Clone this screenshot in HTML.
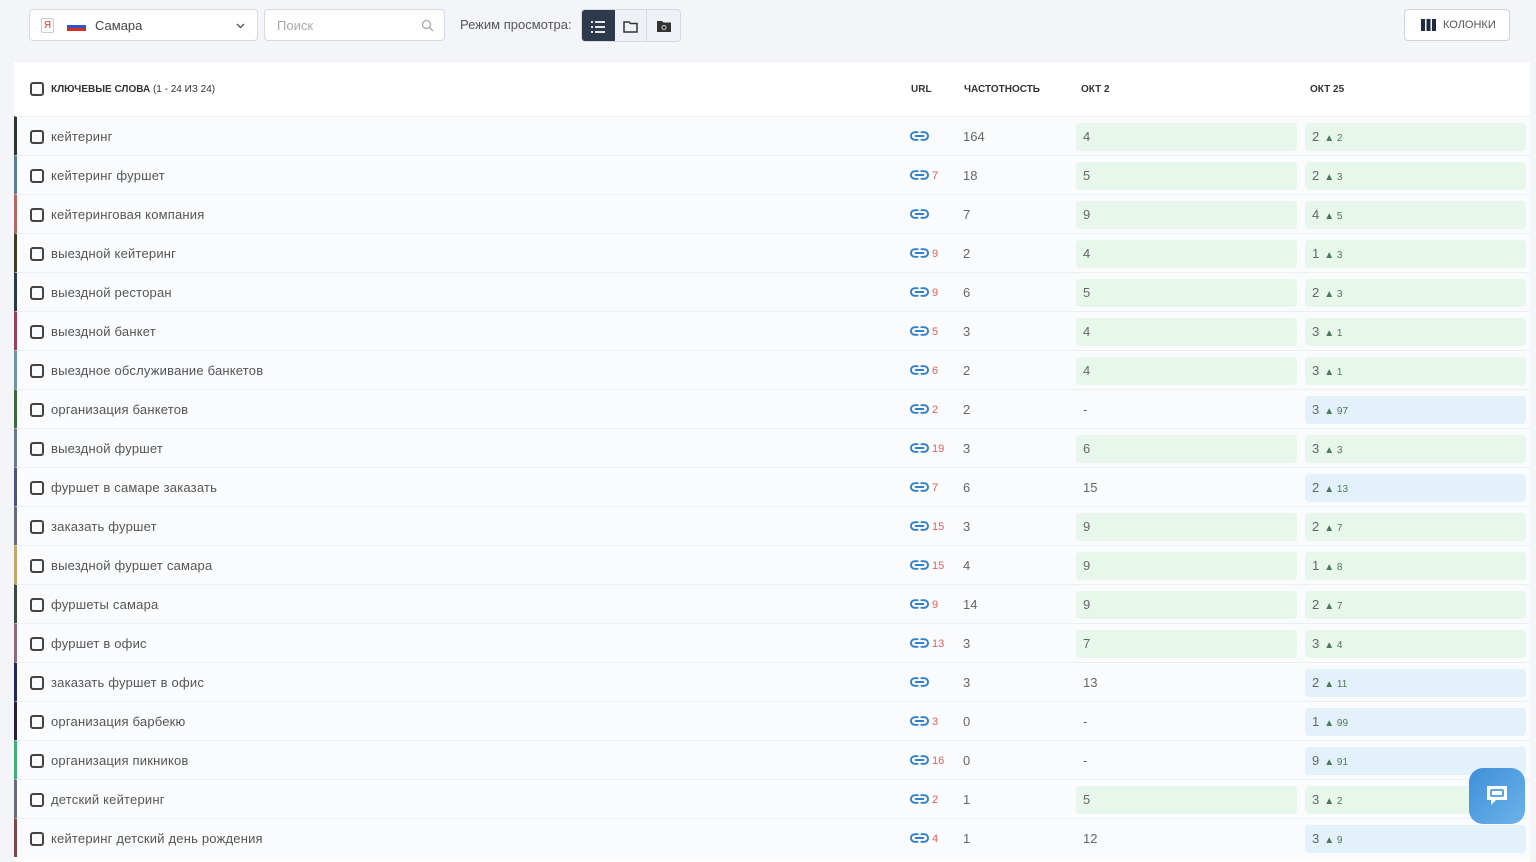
<!DOCTYPE html>
<html><head><meta charset="utf-8"><style>
*{box-sizing:border-box;margin:0;padding:0}
body{width:1536px;height:859px;overflow:hidden;background:#f4f5f9;font-family:"Liberation Sans","DejaVu Sans",sans-serif;color:#555;position:relative}
.sel{position:absolute;left:29px;top:9px;width:229px;height:32px;border:1px solid #d6d9e0;border-radius:4px;background:#fff}
.srch{position:absolute;left:264px;top:9px;width:181px;height:32px;border:1px solid #d6d9e0;border-radius:4px;background:#fff;font-size:13px;color:#aaa;padding:8px 12px}
.mode{position:absolute;left:460px;top:17px;font-size:13px;color:#555}
.btns{position:absolute;left:581px;top:9px;width:100px;height:33px;border:1px solid #d6d9e0;border-radius:4px;background:#eef1f5;display:flex;overflow:hidden}
.btns div{width:33px;height:33px;display:flex;align-items:center;justify-content:center}
.cols{position:absolute;left:1404px;top:9px;width:106px;height:32px;border:1px solid #cfd3da;border-radius:4px;background:#fff;font-size:11px;color:#555;display:flex;align-items:center;padding-left:16px;gap:7px}
.table{position:absolute;left:14px;top:62px;width:1516px;height:800px;background:#fff}
.hd{height:54px;position:relative;font-size:10px;font-weight:bold;color:#333}
.hd span{position:absolute;top:22px}
.cb{position:absolute;left:16px;width:14px;height:14px;border:2px solid #444;border-radius:3px}
.row{height:39px;position:relative;background:#fafbfc;border-top:1px solid #eceef2;border-left:3px solid #333;font-size:13px}
.row .cb{left:13px;top:13px}
.kw{position:absolute;left:34px;top:12px;color:#555;letter-spacing:.2px}
.url{position:absolute;left:893px;top:13px;color:#e06060;font-size:11px;display:flex;align-items:center;gap:3px}
.url span{position:relative;top:1px}
.fr{position:absolute;left:946px;top:12px;color:#666}
.c2,.c3{position:absolute;top:6px;height:28px;border-radius:4px;padding:6px 7px;color:#666}
.c2{left:1059px;width:221px}
.c3{left:1288px;width:221px}
.g{background:#e7f7ec}.b{background:#e3f1fb}
.c3 i{font-style:normal;font-size:10px;color:#4a7a5a;margin-left:5px}
.chat{position:absolute;left:1469px;top:768px;width:56px;height:56px;border-radius:14px;background:linear-gradient(135deg,#3f8fd8,#6bb3ea);display:flex;align-items:center;justify-content:center}
</style></head><body>
<div class="sel">
<div style="position:absolute;left:11px;top:8px;width:13px;height:15px;border:1px solid #ccc;border-radius:2px;font-size:10px;color:#d33;text-align:center;line-height:13px">Я</div>
<div style="position:absolute;left:37px;top:12px;width:19px;height:9px;background:linear-gradient(#fff 0 33%,#2c55c8 33% 66%,#d52b2b 66%)"></div>
<div style="position:absolute;left:65px;top:8px;font-size:13px;color:#444">Самара</div>
<svg style="position:absolute;left:206px;top:12px" width="9" height="8" viewBox="0 0 9 8"><path d="M1 2l3.5 3.5L8 2" stroke="#555" stroke-width="1.4" fill="none"/></svg>
</div>
<div class="srch">Поиск<svg style="position:absolute;right:10px;top:9px" width="13" height="13" viewBox="0 0 13 13"><circle cx="5.5" cy="5.5" r="4" stroke="#aaa" fill="none" stroke-width="1.3"/><path d="M8.5 8.5l3.5 3.5" stroke="#aaa" stroke-width="1.3"/></svg></div>
<div class="mode">Режим просмотра:</div>
<div class="btns">
<div style="background:#2d3a4b"><svg width="14" height="12" viewBox="0 0 14 12"><path d="M0 1h2M4 1h10M0 6h2M4 6h10M0 11h2M4 11h10" stroke="#fff" stroke-width="1.8"/></svg></div>
<div style="border-right:1px solid #d6d9e0"><svg width="15" height="12" viewBox="0 0 15 12"><path d="M1 1h5l1.5 1.5H14V11H1z" stroke="#333" stroke-width="1.5" fill="none"/></svg></div>
<div><svg width="14" height="11" viewBox="0 0 14 11"><path d="M0 0h5l1.5 1.5H14V11H0z" fill="#333"/><circle cx="7" cy="6.5" r="2" stroke="#ccc" fill="none"/></svg></div>
</div>
<div class="cols"><svg width="15" height="12" viewBox="0 0 15 12"><rect x="0" y="0" width="4" height="12" fill="#1f2a44"/><rect x="5.5" y="0" width="4" height="12" fill="#1f2a44"/><rect x="11" y="0" width="4" height="12" fill="#1f2a44"/></svg>КОЛОНКИ</div>
<div class="table">
<div class="hd"><div class="cb" style="top:20px"></div><span style="left:37px">КЛЮЧЕВЫЕ СЛОВА <b style="font-weight:normal">(1 - 24 ИЗ 24)</b></span><span style="left:897px">URL</span><span style="left:950px">ЧАСТОТНОСТЬ</span><span style="left:1067px">ОКТ 2</span><span style="left:1296px">ОКТ 25</span></div>
<svg width="0" height="0" style="position:absolute"><defs><symbol id="lk" viewBox="0 0 20 12"><path d="M8 2H5a4 4 0 0 0 0 8h3M12 2h3a4 4 0 0 1 0 8h-3M6 6h8" stroke="#2f7fc9" stroke-width="2" fill="none" stroke-linecap="round"/></symbol></defs></svg>
<div class="row" style="border-left-color:#2b3630"><div class="cb"></div><div class="kw">кейтеринг</div><div class="url"><svg width="19" height="12"><use href="#lk"/></svg></div><div class="fr">164</div><div class="c2 g">4</div><div class="c3 g">2<i>▲ 2</i></div></div>
<div class="row" style="border-left-color:#5f7d91"><div class="cb"></div><div class="kw">кейтеринг фуршет</div><div class="url"><svg width="19" height="12"><use href="#lk"/></svg><span>7</span></div><div class="fr">18</div><div class="c2 g">5</div><div class="c3 g">2<i>▲ 3</i></div></div>
<div class="row" style="border-left-color:#b36565"><div class="cb"></div><div class="kw">кейтеринговая компания</div><div class="url"><svg width="19" height="12"><use href="#lk"/></svg></div><div class="fr">7</div><div class="c2 g">9</div><div class="c3 g">4<i>▲ 5</i></div></div>
<div class="row" style="border-left-color:#3d3d2a"><div class="cb"></div><div class="kw">выездной кейтеринг</div><div class="url"><svg width="19" height="12"><use href="#lk"/></svg><span>9</span></div><div class="fr">2</div><div class="c2 g">4</div><div class="c3 g">1<i>▲ 3</i></div></div>
<div class="row" style="border-left-color:#2a3a40"><div class="cb"></div><div class="kw">выездной ресторан</div><div class="url"><svg width="19" height="12"><use href="#lk"/></svg><span>9</span></div><div class="fr">6</div><div class="c2 g">5</div><div class="c3 g">2<i>▲ 3</i></div></div>
<div class="row" style="border-left-color:#9a3f5c"><div class="cb"></div><div class="kw">выездной банкет</div><div class="url"><svg width="19" height="12"><use href="#lk"/></svg><span>5</span></div><div class="fr">3</div><div class="c2 g">4</div><div class="c3 g">3<i>▲ 1</i></div></div>
<div class="row" style="border-left-color:#6f93a3"><div class="cb"></div><div class="kw">выездное обслуживание банкетов</div><div class="url"><svg width="19" height="12"><use href="#lk"/></svg><span>6</span></div><div class="fr">2</div><div class="c2 g">4</div><div class="c3 g">3<i>▲ 1</i></div></div>
<div class="row" style="border-left-color:#3b6b3b"><div class="cb"></div><div class="kw">организация банкетов</div><div class="url"><svg width="19" height="12"><use href="#lk"/></svg><span>2</span></div><div class="fr">2</div><div class="c2">-</div><div class="c3 b">3<i>▲ 97</i></div></div>
<div class="row" style="border-left-color:#6b7a8a"><div class="cb"></div><div class="kw">выездной фуршет</div><div class="url"><svg width="19" height="12"><use href="#lk"/></svg><span>19</span></div><div class="fr">3</div><div class="c2 g">6</div><div class="c3 g">3<i>▲ 3</i></div></div>
<div class="row" style="border-left-color:#4f5580"><div class="cb"></div><div class="kw">фуршет в самаре заказать</div><div class="url"><svg width="19" height="12"><use href="#lk"/></svg><span>7</span></div><div class="fr">6</div><div class="c2">15</div><div class="c3 b">2<i>▲ 13</i></div></div>
<div class="row" style="border-left-color:#6a6a7a"><div class="cb"></div><div class="kw">заказать фуршет</div><div class="url"><svg width="19" height="12"><use href="#lk"/></svg><span>15</span></div><div class="fr">3</div><div class="c2 g">9</div><div class="c3 g">2<i>▲ 7</i></div></div>
<div class="row" style="border-left-color:#c2a86a"><div class="cb"></div><div class="kw">выездной фуршет самара</div><div class="url"><svg width="19" height="12"><use href="#lk"/></svg><span>15</span></div><div class="fr">4</div><div class="c2 g">9</div><div class="c3 g">1<i>▲ 8</i></div></div>
<div class="row" style="border-left-color:#3a4a40"><div class="cb"></div><div class="kw">фуршеты самара</div><div class="url"><svg width="19" height="12"><use href="#lk"/></svg><span>9</span></div><div class="fr">14</div><div class="c2 g">9</div><div class="c3 g">2<i>▲ 7</i></div></div>
<div class="row" style="border-left-color:#8a6a7a"><div class="cb"></div><div class="kw">фуршет в офис</div><div class="url"><svg width="19" height="12"><use href="#lk"/></svg><span>13</span></div><div class="fr">3</div><div class="c2 g">7</div><div class="c3 g">3<i>▲ 4</i></div></div>
<div class="row" style="border-left-color:#232a5a"><div class="cb"></div><div class="kw">заказать фуршет в офис</div><div class="url"><svg width="19" height="12"><use href="#lk"/></svg></div><div class="fr">3</div><div class="c2">13</div><div class="c3 b">2<i>▲ 11</i></div></div>
<div class="row" style="border-left-color:#2a1f3a"><div class="cb"></div><div class="kw">организация барбекю</div><div class="url"><svg width="19" height="12"><use href="#lk"/></svg><span>3</span></div><div class="fr">0</div><div class="c2">-</div><div class="c3 b">1<i>▲ 99</i></div></div>
<div class="row" style="border-left-color:#3fae7a"><div class="cb"></div><div class="kw">организация пикников</div><div class="url"><svg width="19" height="12"><use href="#lk"/></svg><span>16</span></div><div class="fr">0</div><div class="c2">-</div><div class="c3 b">9<i>▲ 91</i></div></div>
<div class="row" style="border-left-color:#6a6a7a"><div class="cb"></div><div class="kw">детский кейтеринг</div><div class="url"><svg width="19" height="12"><use href="#lk"/></svg><span>2</span></div><div class="fr">1</div><div class="c2 g">5</div><div class="c3 g">3<i>▲ 2</i></div></div>
<div class="row" style="border-left-color:#7a4a4a"><div class="cb"></div><div class="kw">кейтеринг детский день рождения</div><div class="url"><svg width="19" height="12"><use href="#lk"/></svg><span>4</span></div><div class="fr">1</div><div class="c2">12</div><div class="c3 b">3<i>▲ 9</i></div></div>
</div>
<div class="chat"><svg width="26" height="26" viewBox="0 0 26 26"><path d="M3 3h20v14H12l-5 5v-5H3z" fill="#fff"/><rect x="7" y="7" width="12" height="6" rx="1" fill="none" stroke="#4a9ade" stroke-width="1.8"/></svg></div>
</body></html>
